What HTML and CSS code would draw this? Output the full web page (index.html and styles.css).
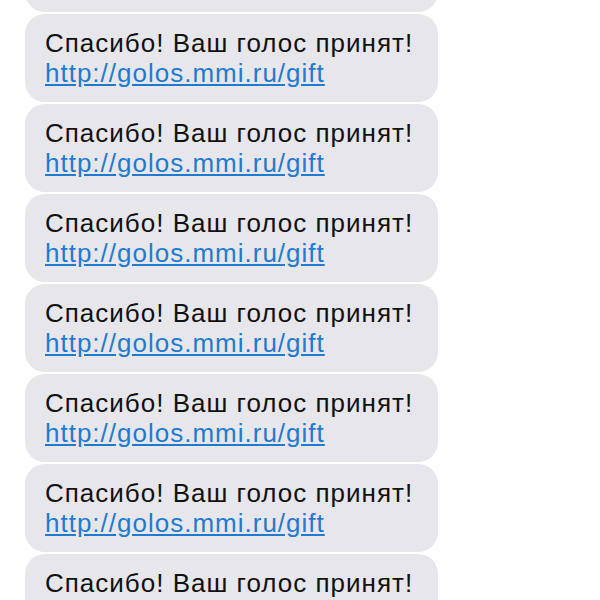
FILE: index.html
```html
<!DOCTYPE html>
<html lang="ru">

<head>
    <meta charset="UTF-8">
    <title>Сообщения</title>
    <link rel="stylesheet" href="styles.css">
</head>

<body>
    <div class="thread">
        <div class="bubble">
            <p>Спасибо! Ваш голос принят!</p>
            <a href="#">http://golos.mmi.ru/gift</a>
        </div>
        <div class="bubble">
            <p>Спасибо! Ваш голос принят!</p>
            <a href="#">http://golos.mmi.ru/gift</a>
        </div>
        <div class="bubble">
            <p>Спасибо! Ваш голос принят!</p>
            <a href="#">http://golos.mmi.ru/gift</a>
        </div>
        <div class="bubble">
            <p>Спасибо! Ваш голос принят!</p>
            <a href="#">http://golos.mmi.ru/gift</a>
        </div>
        <div class="bubble">
            <p>Спасибо! Ваш голос принят!</p>
            <a href="#">http://golos.mmi.ru/gift</a>
        </div>
        <div class="bubble">
            <p>Спасибо! Ваш голос принят!</p>
            <a href="#">http://golos.mmi.ru/gift</a>
        </div>
        <div class="bubble">
            <p>Спасибо! Ваш голос принят!</p>
            <a href="#">http://golos.mmi.ru/gift</a>
        </div>
        <div class="bubble">
            <p>Спасибо! Ваш голос принят!</p>
            <a href="#">http://golos.mmi.ru/gift</a>
        </div>
    </div>
</body>

</html>
```

FILE: styles.css
```css
body {
    font-family: 'Liberation Sans', Arial, sans-serif;
    background-color: #ffffff;
    margin: 0;
    height: 600px;
    overflow: hidden;
}

.thread {
    display: flex;
    flex-direction: column;
    gap: 2px;
    margin-top: -76px;
    padding-left: 25px;
}

.bubble {
    width: 413px;
    box-sizing: border-box;
    height: 88px;
    padding: 14px 20px;
    background-color: #e6e6eb;
    border-radius: 20px;
    font-size: 26px;
    line-height: 30px;
    letter-spacing: 1px;
    color: #111111;
}

.bubble p {
    margin: 0;
    white-space: nowrap;
}

.bubble a {
    color: #1f7bd0;
    text-decoration: underline;
}
```
